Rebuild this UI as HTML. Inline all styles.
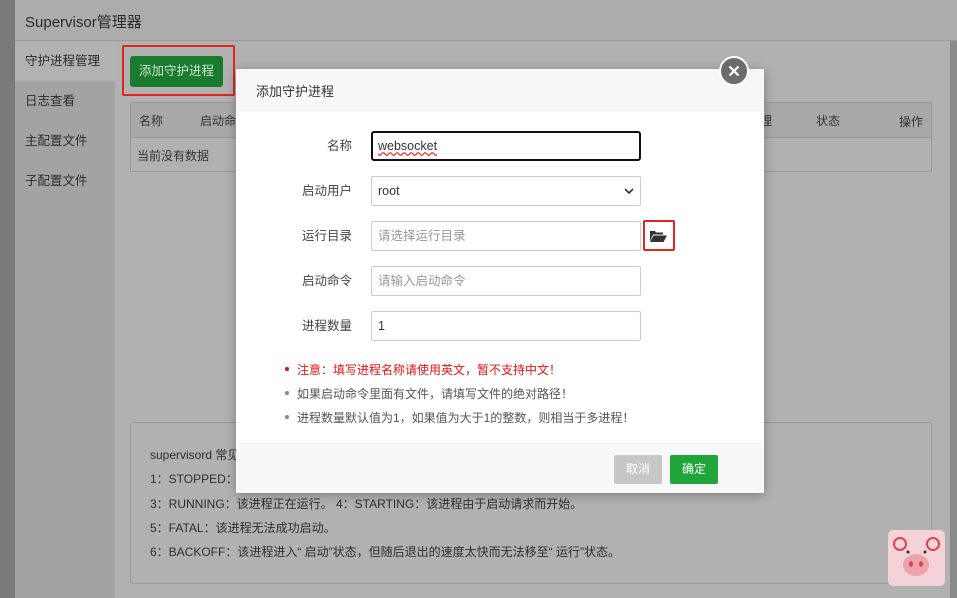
<!DOCTYPE html><html><head><meta charset="utf-8"><style>
*{box-sizing:border-box;margin:0;padding:0}
body{width:957px;height:598px;position:relative;overflow:hidden;font-family:"Liberation Sans","Noto Sans CJK SC",sans-serif;font-size:12px;color:#333;background:#a9a9a9}
.a{position:absolute}
.hdr{left:15px;top:0;width:942px;height:41px;background:#acacac;border-bottom:1px solid #9a9a9a;font-size:15px;color:#2a2a2a;padding:11px 10px}
.side{left:15px;top:41px;width:100px;height:557px;background:#a3a3a3}
.side div{height:40px;line-height:40px;padding-left:10px;font-size:12.5px;color:#2c2c2c}
.main{left:115px;top:41px;width:835px;height:557px;background:#b1b1b1}
.dlg{left:236px;top:69px;width:528px;height:424px;background:#fff;box-shadow:0 2px 10px rgba(0,0,0,.3)}
.inp{position:absolute;left:135px;width:270px;height:30px;border:1px solid #ccc;border-radius:2px;padding:0 6px;line-height:28px;font-size:12.5px}
.lbl{position:absolute;left:0;width:116px;text-align:right;font-size:12.5px;line-height:30px;color:#444}
.note{position:absolute;left:61px;font-size:12px;color:#555}
.note:before{content:"";position:absolute;left:-12px;top:6px;width:4px;height:4px;border-radius:2px;background:#888}
.bt{position:absolute;line-height:24px;font-size:12px;color:#2e2e2e}
</style></head><body>
<div class="a" style="left:0;top:0;width:15px;height:598px;background:#7a7a7a"></div>
<div class="a hdr">Supervisor管理器</div>
<div class="a side"><div style="background:#b2b2b2">守护进程管理</div><div>日志查看</div><div>主配置文件</div><div>子配置文件</div></div>
<div class="a main"></div>
<div class="a" style="left:950px;top:41px;width:7px;height:557px;background:#8a8a8a"></div>
<div class="a" style="left:122px;top:45px;width:113px;height:51px;border:2px solid #e0251e;border-radius:2px"></div>
<div class="a" style="left:130px;top:56px;width:93px;height:31px;background:#1a7a2e;border-radius:3px;color:#cfe5d0;font-size:12.5px;line-height:31px;text-align:center">添加守护进程</div>
<div class="a" style="left:130px;top:102px;width:802px;height:70px;border:1px solid #999"><div style="height:35px;background:#a8a8a8;border-bottom:1px solid #999"></div></div>
<div class="a" style="left:139px;top:112px;color:#333">名称</div>
<div class="a" style="left:200px;top:112px;color:#333">启动命</div>
<div class="a" style="left:137px;top:147px;color:#333">当前没有数据</div>
<div class="a" style="left:736px;top:112px;color:#333">程管理</div>
<div class="a" style="left:816px;top:112px;color:#333">状态</div>
<div class="a" style="left:899px;top:113px;color:#333">操作</div>
<div class="a" style="left:130px;top:422px;width:802px;height:162px;border:1px solid #999;border-radius:3px"></div>
<div class="bt" style="left:150px;top:443px">supervisord 常见</div>
<div class="bt" style="left:150px;top:467px">1：STOPPED：</div>
<div class="bt" style="left:150px;top:492px">3：RUNNING：该进程正在运行。 4：STARTING：该进程由于启动请求而开始。</div>
<div class="bt" style="left:150px;top:516px">5：FATAL：该进程无法成功启动。</div>
<div class="bt" style="left:150px;top:540px">6：BACKOFF：该进程进入“ 启动”状态，但随后退出的速度太快而无法移至“ 运行”状态。</div>
<div class="a dlg">
<div style="height:42px;background:#f8f8f8;border-bottom:1px solid #eee;padding:12px 20px;font-size:13px;color:#333">添加守护进程</div>
<div class="lbl" style="top:62px">名称</div><div class="inp" style="top:62px;border:2px solid #111;border-radius:3px;line-height:26px;padding-left:5px"><span style="text-decoration:underline wavy #e33">websocket</span></div>
<div class="lbl" style="top:107px">启动用户</div><div class="inp" style="top:107px">root<svg style="position:absolute;right:6px;top:11px" width="10" height="7"><path d="M1 1l4 4 4-4" stroke="#333" stroke-width="1.6" fill="none"/></svg></div>
<div class="lbl" style="top:152px">运行目录</div><div class="inp" style="top:152px;color:#999">请选择运行目录</div>
<div class="a" style="left:407px;top:151px;width:32px;height:31px;border:2px solid #e0251e;border-radius:2px"><svg style="position:absolute;left:5px;top:8px" width="17" height="12" viewBox="0 0 17 12"><path d="M0 1h5l1 1.5h7v2H3L0 11z" fill="#333"/><path d="M3.5 5.5H17L13.5 12H0z" fill="#333"/></svg></div>
<div class="lbl" style="top:197px">启动命令</div><div class="inp" style="top:197px;color:#999">请输入启动命令</div>
<div class="lbl" style="top:242px">进程数量</div><div class="inp" style="top:242px">1</div>
<div class="note" style="top:292px;color:#e11">注意：填写进程名称请使用英文，暂不支持中文！</div>
<div class="a" style="left:49px;top:298px;width:4px;height:4px;border-radius:2px;background:#e11"></div>
<div class="note" style="top:316px">如果启动命令里面有文件，请填写文件的绝对路径！</div>
<div class="note" style="top:340px">进程数量默认值为1，如果值为大于1的整数，则相当于多进程！</div>
<div style="position:absolute;left:0;top:374px;width:528px;height:50px;background:#f8f8f8;border-top:1px solid #f0f0f0"></div>
<div class="a" style="left:378px;top:386px;width:48px;height:29px;background:#c7c7c7;border-radius:2px;color:#fff;text-align:center;line-height:29px">取消</div>
<div class="a" style="left:434px;top:386px;width:48px;height:29px;background:#20a53a;border-radius:2px;color:#fff;text-align:center;line-height:29px">确定</div>
</div>
<div class="a" style="left:719px;top:56px;width:30px;height:30px;border-radius:15px;background:#6b6b6b;border:2px solid #fff"><svg style="position:absolute;left:7px;top:7px" width="12" height="12"><path d="M1.5 1.5l9 9M10.5 1.5l-9 9" stroke="#fff" stroke-width="2.2"/></svg></div>
<div class="a" style="left:888px;top:530px;width:57px;height:56px;background:#f3d3d7;border-radius:5px"><svg width="57" height="56"><circle cx="12" cy="14" r="6" fill="none" stroke="#d8474f" stroke-width="2"/><circle cx="45" cy="14" r="6" fill="none" stroke="#d8474f" stroke-width="2"/><circle cx="20" cy="22" r="1.5" fill="#333"/><circle cx="37" cy="22" r="1.5" fill="#333"/><ellipse cx="28" cy="35" rx="13" ry="11" fill="#eca3ab"/><ellipse cx="23" cy="34" rx="2" ry="3" fill="#d8474f"/><ellipse cx="33" cy="34" rx="2" ry="3" fill="#d8474f"/></svg></div>
</body></html>
